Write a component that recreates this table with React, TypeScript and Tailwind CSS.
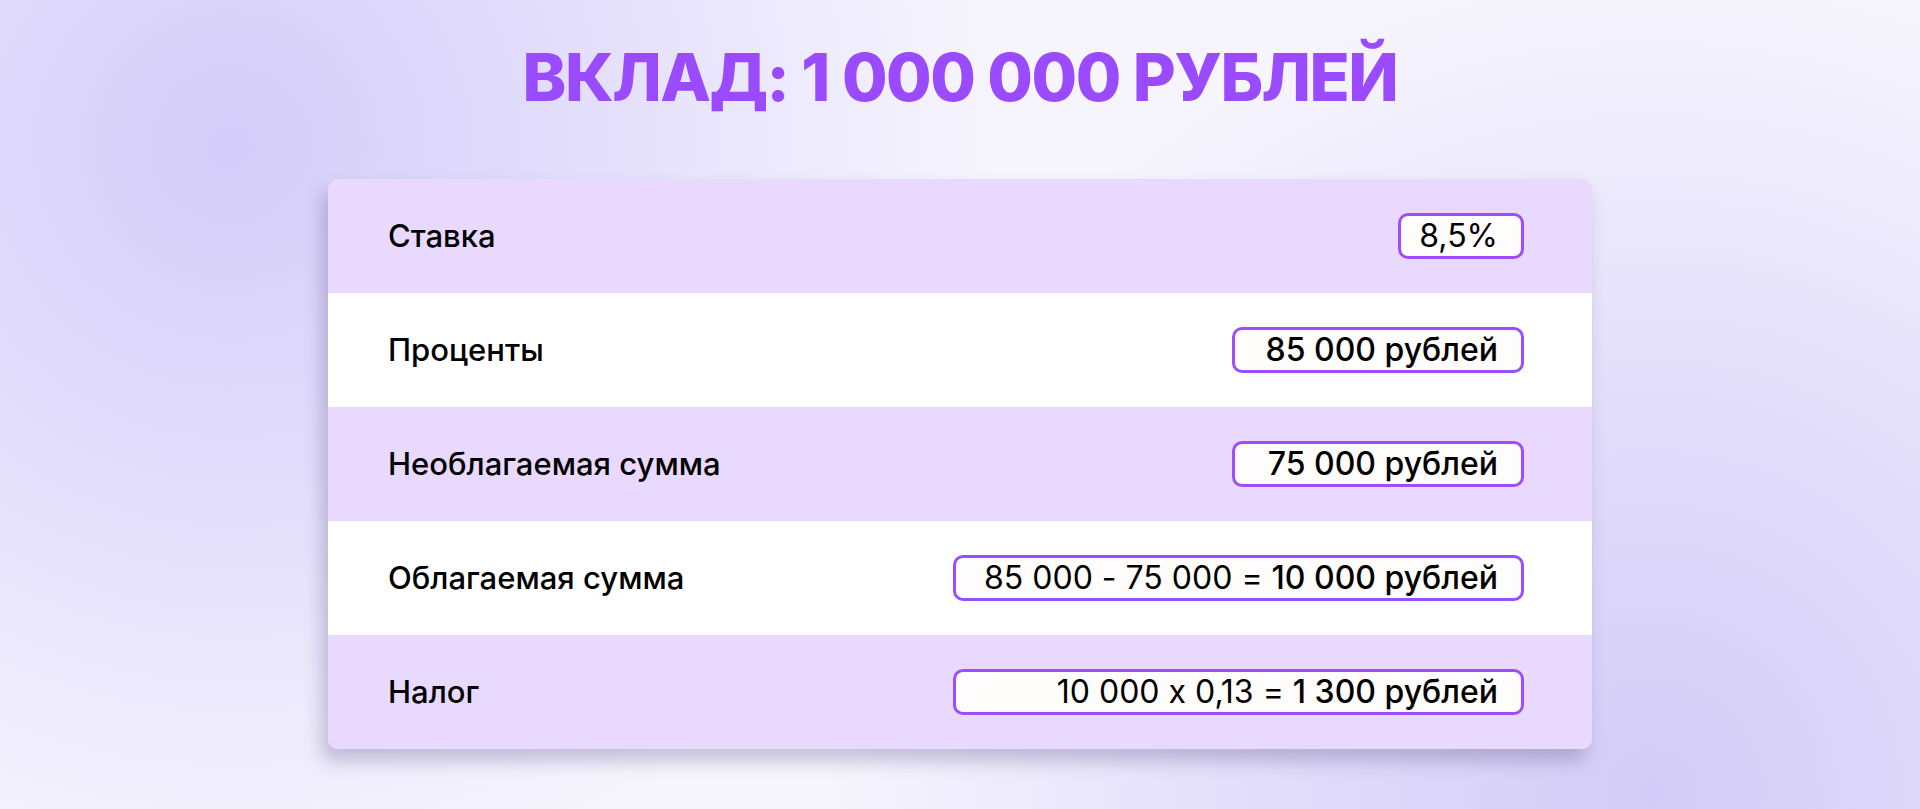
const rows = [
  { label: "Ставка", width: "w-[126px]", bg: "bg-[#e9d9fe]", plain: "8,5%", bold: "" },
  { label: "Проценты", width: "w-[292px]", bg: "bg-white", plain: "", bold: "85 000 рублей" },
  { label: "Необлагаемая сумма", width: "w-[292px]", bg: "bg-[#e9d9fe]", plain: "", bold: "75 000 рублей" },
  { label: "Облагаемая сумма", width: "w-[571px]", bg: "bg-white", plain: "85 000 - 75 000 = ", bold: "10 000 рублей" },
  { label: "Налог", width: "w-[571px]", bg: "bg-[#e9d9fe]", plain: "10 000 x 0,13 = ", bold: "1 300 рублей" },
];

const App = () => {
  return (
    <div className="h-[809px] w-full overflow-hidden bg-[#f6f5fd] bg-[radial-gradient(circle_at_12%_18%,#d4cdfa_0%,rgba(212,205,250,0.6)_18%,rgba(246,245,253,0)_42%),radial-gradient(circle_at_86%_98%,#d3ccf8_0%,rgba(211,204,248,0.6)_20%,rgba(246,245,253,0)_45%)] font-['Inter',sans-serif] text-black [font-feature-settings:'calt'_0]">
      <div className="flex flex-col items-center pt-[44px]">
        <h1 className="text-[66px] leading-none font-extrabold tracking-[-1.5px] text-[#9a4bff]">
          ВКЛАД: 1 000 000 РУБЛЕЙ
        </h1>

        <div className="mt-[69px] w-[1264px] overflow-hidden rounded-[10px] shadow-[-6px_12px_18px_rgba(70,60,120,0.28)]">
          {rows.map((row) => (
            <div
              key={row.label}
              className={`flex h-[114px] items-center justify-between pl-[60px] pr-[68px] ${row.bg}`}
            >
              <span className="text-[31px] font-medium">{row.label}</span>
              <div
                className={`flex h-[46px] items-center justify-end rounded-[10px] border-[3px] border-[#9b4dff] bg-[#fffdfb] pr-[23px] text-[32px] ${row.width}`}
              >
                <span className="whitespace-pre">
                  {row.plain}
                  {row.bold && <span className="font-medium">{row.bold}</span>}
                </span>
              </div>
            </div>
          ))}
        </div>
      </div>
    </div>
  );
};

export default App;
